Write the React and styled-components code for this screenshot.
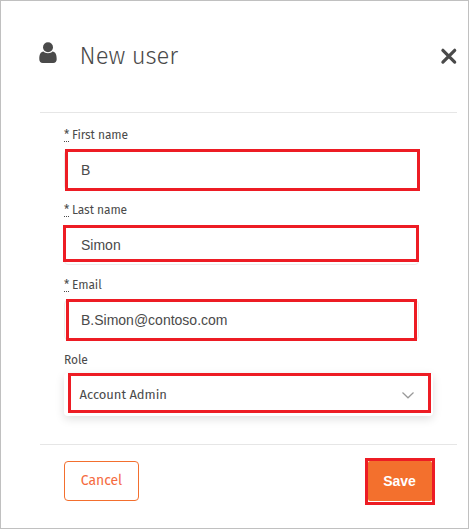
import React from 'react';
import styled, { createGlobalStyle } from 'styled-components';

const GlobalStyle = createGlobalStyle`
  *, *::before, *::after { box-sizing: border-box; }
  body { margin: 0; background: #fff; }
`;

const humanist = '"Fira Sans", "Noto Sans", sans-serif';
const grotesque = '"Liberation Sans", Arial, sans-serif';

const Dialog = styled.main`
  width: 469px;
  height: 529px;
  padding: 0 11px 0 39px;
  border: 1px solid #c0c0c0;
  background: #fff;
  color: #4a4a4a;
  font-family: ${humanist};
`;

const Header = styled.header`
  display: flex;
  align-items: flex-start;
  height: 112px;
  border-bottom: 1px solid #e6e6e6;
`;

const UserIcon = styled.svg`
  width: 18px;
  height: 22px;
  margin: 41px 0 0 -1px;
`;

const Title = styled.h1`
  flex: 1;
  margin: 37px 0 0 22.6px;
  font: 300 24px/36px "Fira Sans", "Open Sans", sans-serif;
  letter-spacing: -0.1px;
`;

const CloseButton = styled.button`
  width: 18px;
  height: 18px;
  margin: 46px -1px 0 0;
  padding: 0;
  border: 0;
  background: none;
  svg { display: block; }
`;

const Form = styled.form`
  height: 332px;
  padding: 12px 0 0 24px;
  border-bottom: 1px solid #e6e6e6;
`;

const Field = styled.div`
  height: 75px;
`;

const Label = styled.label`
  display: flex;
  gap: 3px;
  height: 25px;
  font-size: 12px;
  line-height: 21px;
  letter-spacing: -0.08px;
`;

const Required = styled.abbr`
  width: 5px;
  height: 17px;
  border-bottom: 1px dotted #4a4a4a;
  text-decoration: none;
`;

const Control = styled.div`
  position: relative;
  display: flex;
  align-items: center;
  width: 355px;
  height: 40px;
  padding: 0 16px;
  border: 1px solid #ececec;
  border-radius: 4px;
`;

const Value = styled.span`
  font: 14px/20px ${grotesque};
`;

const SelectBox = styled(Control)`
  justify-content: space-between;
  width: 369px;
  height: 43px;
  margin-top: -2px;
  padding: 0 19px 0 15.6px;
  border: 0;
  box-shadow: 0 3px 10px rgba(0, 0, 0, 0.13);
`;

const SelectValue = styled.span`
  font-size: 13px;
  line-height: 20px;
  letter-spacing: -0.05px;
`;

const Highlight = styled.span`
  position: absolute;
  top: ${(p) => p.$top}px;
  left: ${(p) => p.$left}px;
  width: ${(p) => p.$width}px;
  height: ${(p) => p.$height}px;
  border: 3px solid #ed1c24;
  pointer-events: none;
`;

const Footer = styled.footer`
  display: flex;
  justify-content: space-between;
  padding: 16px 25px 0 24px;
`;

const Button = styled.button`
  height: 40px;
  padding: 0;
  border-radius: 4px;
`;

const CancelButton = styled(Button)`
  width: 75px;
  border: 1px solid #f36f2e;
  background: #fff;
  color: #f56b40;
  font: 14px/20px ${humanist};
  letter-spacing: -0.05px;
`;

const SaveButton = styled(Button)`
  position: relative;
  width: 64px;
  padding-right: 1px;
  border: 0;
  border-radius: 2px;
  background: #f3702d;
  color: #fff;
  font: bold 14px/20px ${grotesque};
`;

const fields = [
  { id: 'first', label: 'First name', value: 'B', box: [-2, 0, 355, 42] },
  { id: 'last', label: 'Last name', value: 'Simon', box: [-1, -2, 356, 37] },
  { id: 'email', label: 'Email', value: 'B.Simon@contoso.com', box: [-2, 1, 351, 42] },
];

function Mark({ box }) {
  const [top, left, width, height] = box;
  return <Highlight $top={top} $left={left} $width={width} $height={height} />;
}

export default function App() {
  return (
    <>
      <GlobalStyle />
      <Dialog>
        <Header>
          <UserIcon viewBox="0 0 18 22" fill="#4a4a4a">
            <circle cx="9" cy="5.2" r="5" />
            <path d="M4.5 9.6C1.5 9.8.3 12.8.3 17.2c0 2.4 1.3 3.8 3.5 3.8h10.4c2.2 0 3.5-1.4 3.5-3.8 0-4.4-1.2-7.4-4.2-7.6C12.6 10.6 11 11.3 9 11.3s-3.6-.7-4.5-1.7Z" />
          </UserIcon>
          <Title>New user</Title>
          <CloseButton aria-label="Close">
            <svg width="18" height="18" viewBox="0 0 18 18" fill="none" stroke="#4a4a4a" strokeWidth="3.2" strokeLinecap="round">
              <path d="M2.9 3.3 14.7 15.1M14.7 3.3 2.9 15.1" />
            </svg>
          </CloseButton>
        </Header>
        <Form>
          {fields.map((f) => (
            <Field key={f.id}>
              <Label>
                <Required>*</Required>
                {f.label}
              </Label>
              <Control>
                <Value>{f.value}</Value>
                <Mark box={f.box} />
              </Control>
            </Field>
          ))}
          <Field>
            <Label>Role</Label>
            <SelectBox>
              <SelectValue>Account Admin</SelectValue>
              <svg width="12" height="8" viewBox="0 0 12 8" fill="none" stroke="#999" strokeWidth="1.2">
                <path d="M.5 1.5 6 6.8 11.5 1.5" />
              </svg>
              <Mark box={[0, 4, 363, 40]} />
            </SelectBox>
          </Field>
        </Form>
        <Footer>
          <CancelButton>Cancel</CancelButton>
          <SaveButton>
            Save
            <Mark box={[-3, -3, 70, 47]} />
          </SaveButton>
        </Footer>
      </Dialog>
    </>
  );
}
